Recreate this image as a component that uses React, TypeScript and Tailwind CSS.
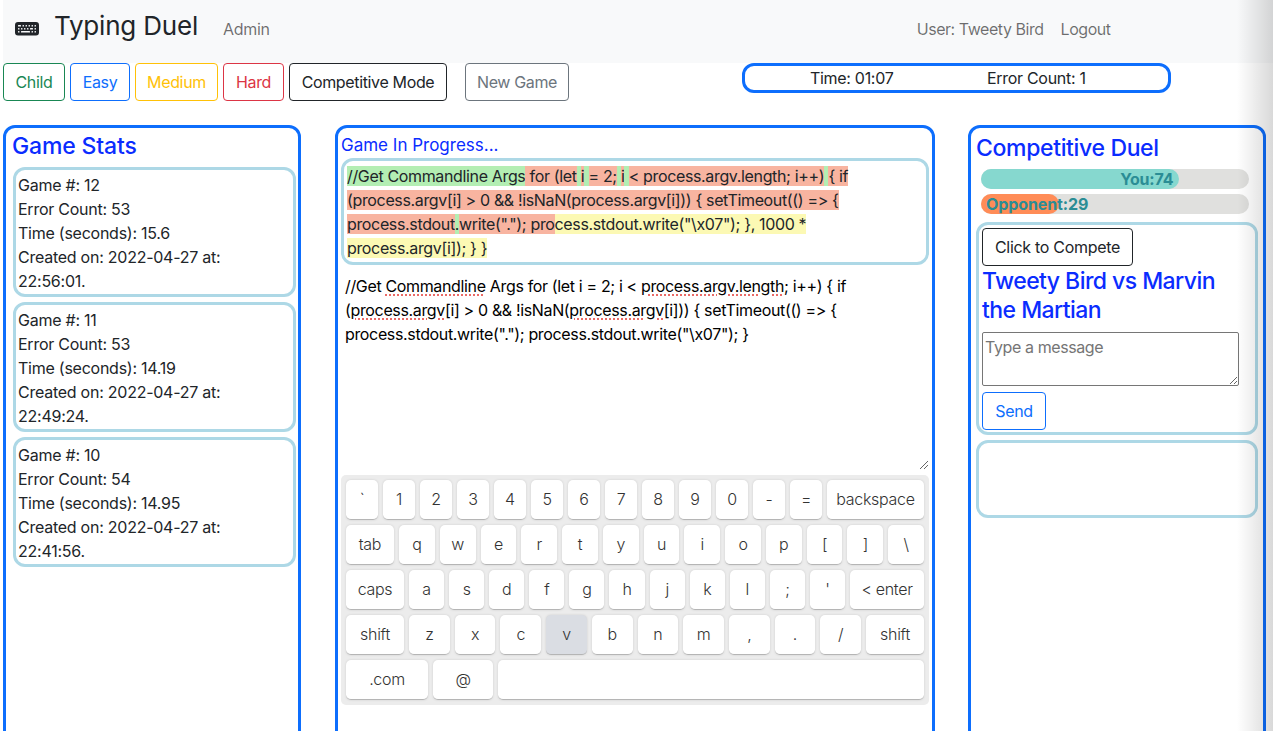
import React from "react";
import { BsKeyboardFill } from "react-icons/bs";

const games = [
  { id: 12, errors: 53, time: "15.6", created: "22:56:01." },
  { id: 11, errors: 53, time: "14.19", created: "22:49:24." },
  { id: 10, errors: 54, time: "14.95", created: "22:41:56." },
];

const modes = [
  { label: "Child", cls: "w-[62px] border-[#198754] text-[#198754]" },
  { label: "Easy", cls: "w-[60px] border-[#0d6efd] text-[#0d6efd]" },
  { label: "Medium", cls: "w-[83px] border-[#ffc107] text-[#ffc107]" },
  { label: "Hard", cls: "w-[61px] border-[#dc3545] text-[#dc3545]" },
  { label: "Competitive Mode", cls: "w-[158px] border-[#212529] text-[#212529]" },
];

const numberRow = ["`", "1", "2", "3", "4", "5", "6", "7", "8", "9", "0", "-", "="];
const tabRow = ["q", "w", "e", "r", "t", "y", "u", "i", "o", "p", "[", "]", "\\"];
const capsRow = ["a", "s", "d", "f", "g", "h", "j", "k", "l", ";", "'"];
const shiftRow = ["z", "x", "c", "v", "b", "n", "m", ",", ".", "/"];

type Seg = { t: string; c?: "g" | "r" | "y" };

const typed: Seg[][] = [
  [
    { t: "//Get Commandline Args", c: "g" },
    { t: " for (let", c: "r" },
    { t: " ", c: "g" },
    { t: "i", c: "r" },
    { t: " ", c: "g" },
    { t: "= 2;", c: "r" },
    { t: " ", c: "g" },
    { t: "i", c: "r" },
    { t: " ", c: "g" },
    { t: "< process.argv.length; i++)", c: "r" },
    { t: " ", c: "g" },
    { t: "{ if", c: "r" },
  ],
  [{ t: "(process.argv[i] > 0 && !isNaN(process.argv[i])) { setTimeout(() => {", c: "r" }],
  [
    { t: "process.stdout", c: "r" },
    { t: ".", c: "g" },
    { t: 'write("."); pro', c: "r" },
    { t: 'cess.stdout.write("\\x07"); }, 1000 *', c: "y" },
  ],
  [{ t: "process.argv[i]); } }", c: "y" }],
];

const segColor = { g: "bg-[#b3eeb3]", r: "bg-[#f8b4a0]", y: "bg-[#fcf9b4]" };

function Key({ label, cls = "flex-1", active = false }: { label: string; cls?: string; active?: boolean }) {
  return (
    <div
      className={`flex h-[40px] items-center justify-center rounded-[5px] border-b border-[#b5b5b5] pb-[2px] text-[16px] font-light tracking-[-0.3px] text-[#333] shadow-[0_0_3px_-1px_rgba(0,0,0,0.3)] ${
        active ? "bg-[#dadde3]" : "bg-white"
      } ${cls}`}
    >
      {label}
    </div>
  );
}

function Squiggle({ children }: { children: React.ReactNode }) {
  return (
    <span className="underline decoration-[#ea6a66] decoration-dotted decoration-[1.5px] underline-offset-[2px]">{children}</span>
  );
}

export default function App() {
  return (
    <div className="relative h-[731px] w-full overflow-hidden bg-white font-['Inter',sans-serif] text-[16px] leading-6 text-[#212529]">
      <header className="ml-[3px] flex h-[63px] items-center bg-[#f8f9fa] pb-[7px] pl-[12px]">
        <BsKeyboardFill className="h-[24px] w-[24px] text-[#212529]" />
        <span className="mb-[4px] ml-[15px] text-[26px] tracking-[-0.2px] text-[#212529]">Typing Duel</span>
        <span className="ml-[25px] mt-[2px] text-[#00000091] tracking-[-0.3px]">Admin</span>
        <span className="ml-[647px] mt-[2px] text-[#00000091] tracking-[-0.45px]">User: Tweety Bird</span>
        <span className="ml-[17px] mt-[2px] text-[#00000091] tracking-[-0.45px]">Logout</span>
      </header>

      <div className="flex items-start pl-[3px]">
        <div className="flex gap-[5px]">
          {modes.map((m) => (
            <button key={m.label} className={`h-[38px] rounded-[4px] border tracking-[-0.35px] ${m.cls}`}>
              {m.label}
            </button>
          ))}
        </div>
        <button className="ml-[18px] h-[38px] w-[104px] rounded-[4px] border border-[#6c757d] tracking-[-0.35px] text-[#6c757d]">
          New Game
        </button>
        <div className="ml-[173px] flex h-[30px] w-[429px] items-center rounded-[12px] border-[3px] border-[#0d6efd] pl-[65px] tracking-[-0.3px]">
          <span className="w-[177px]">Time: 01:07</span>
          <span>Error Count: 1</span>
        </div>
      </div>

      <main className="mt-[24px] flex items-start pl-[3px]">
        <section className="h-[640px] w-[298px] rounded-[12px] border-[3px] border-[#0d6efd] pl-[7px] pr-[2px]">
          <h2 className="-ml-[1px] mt-[4px] text-[23px] font-medium leading-[29px] tracking-[-0.15px] text-[#0a2cff]">Game Stats</h2>
          <div className="mt-[6px] flex flex-col gap-[5px]">
            {games.map((g) => (
              <div key={g.id} className="h-[130px] rounded-[12px] border-[3px] border-[#add8e6] px-[2px] py-[3px] tracking-[-0.25px]">
                <p>Game #: {g.id}</p>
                <p>Error Count: {g.errors}</p>
                <p>Time (seconds): {g.time}</p>
                <p>Created on: 2022-04-27 at:</p>
                <p>{g.created}</p>
              </div>
            ))}
          </div>
        </section>

        <section className="ml-[34px] h-[640px] w-[600px] rounded-[12px] border-[3px] border-[#0d6efd] px-[3px]">
          <p className="mt-[5px] text-[17px] text-[#0a2cff]">Game In Progress...</p>
          <div className="mt-[1px] h-[107px] w-[588px] rounded-[12px] border-[3px] border-[#add8e6] px-[3px] py-[3px] tracking-[-0.35px]">
            {typed.map((line, i) => (
              <div key={i} className="whitespace-pre">
                {line.map((s, j) => (
                  <span key={j} className={s.c ? segColor[s.c] : ""}>
                    {s.t}
                  </span>
                ))}
              </div>
            ))}
          </div>

          <div className="relative h-[210px] w-[588px] px-[4px] pt-[9px] tracking-[-0.35px] text-black">
            <p className="whitespace-pre">
              //Get <Squiggle>Commandline</Squiggle> Args for (let i = 2; i &lt; <Squiggle>process.argv.length</Squiggle>; i++) {"{"} if
            </p>
            <p className="whitespace-pre">
              (<Squiggle>process.argv</Squiggle>[i] &gt; 0 &amp;&amp; !isNaN(<Squiggle>process.argv</Squiggle>[i])) {"{"} setTimeout(() =&gt; {"{"}
            </p>
            <p className="whitespace-pre">process.stdout.write("."); process.stdout.write("\x07"); {"}"}</p>
            <svg className="absolute bottom-[6px] right-[1px] h-[8px] w-[8px]" viewBox="0 0 8 8">
              <path d="M0 8 L8 0 M4 8 L8 4" stroke="#666" strokeWidth="1" />
            </svg>
          </div>

          <div className="flex w-[588px] flex-col gap-[5px] rounded-[5px] bg-[#ececec] p-[5px]">
            <div className="flex gap-[5px]">
              {numberRow.map((k) => (
                <Key key={k} label={k} />
              ))}
              <Key label="backspace" cls="w-[97px] shrink-0" />
            </div>
            <div className="flex gap-[5px]">
              <Key label="tab" cls="w-[48px] shrink-0" />
              {tabRow.map((k) => (
                <Key key={k} label={k} />
              ))}
            </div>
            <div className="flex gap-[5px]">
              <Key label="caps" cls="w-[58px] shrink-0" />
              {capsRow.map((k) => (
                <Key key={k} label={k} />
              ))}
              <Key label="< enter" cls="w-[74px] shrink-0" />
            </div>
            <div className="flex gap-[5px]">
              <Key label="shift" cls="w-[58px] shrink-0" />
              {shiftRow.map((k) => (
                <Key key={k} label={k} active={k === "v"} />
              ))}
              <Key label="shift" cls="w-[58px] shrink-0" />
            </div>
            <div className="flex gap-[5px]">
              <Key label=".com" cls="w-[82px] shrink-0" />
              <Key label="@" cls="w-[60px] shrink-0" />
              <Key label="" />
            </div>
          </div>
        </section>

        <section className="ml-[33px] h-[640px] w-[298px] rounded-[12px] border-[3px] border-[#0d6efd] px-[5px]">
          <h2 className="mt-[6px] text-[23px] font-medium leading-[29px] tracking-[-0.35px] text-[#0a2cff]">Competitive Duel</h2>
          <div className="ml-[5px] mr-[9px] mt-[6px] h-[20px] rounded-[10px] bg-[#e0e0de]">
            <div className="flex h-full w-[74%] items-center justify-end rounded-[10px] bg-[#86d8cf] pr-[6px] text-[16px] font-bold tracking-[-0.2px] text-[#2b8d95]">
              You:74
            </div>
          </div>
          <div className="ml-[5px] mr-[9px] mt-[5px] h-[20px] rounded-[10px] bg-[#e0e0de]">
            <div className="flex h-full w-[29%] items-center whitespace-nowrap rounded-[10px] bg-[#ff8c57] pl-[5px] text-[16px] font-bold tracking-[-0.1px] text-[#2b8d95]">
              Opponent:29
            </div>
          </div>

          <div className="mt-[8px] h-[213px] rounded-[12px] border-[3px] border-[#add8e6] px-[3px] py-[3px]">
            <button className="h-[38px] w-[151px] rounded-[4px] border border-[#212529] tracking-[-0.3px]">Click to Compete</button>
            <h3 className="mt-[1px] text-[23px] font-medium leading-[29px] tracking-[-0.55px] text-[#0a2cff]">
              Tweety Bird vs Marvin the Martian
            </h3>
            <textarea
              className="mt-[7px] block h-[54px] w-[257px] rounded-[2px] border border-[#767676] px-[2px] py-[2px] tracking-[-0.4px] placeholder:text-[#757575]"
              placeholder="Type a message"
            />
            <button className="mt-[6px] h-[38px] w-[64px] rounded-[4px] border border-[#0d6efd] tracking-[-0.3px] text-[#0d6efd]">Send</button>
          </div>
          <div className="mt-[5px] h-[78px] rounded-[12px] border-[3px] border-[#add8e6]" />
        </section>
      </main>

      {/* page shadow on the right edge */}
      <div className="pointer-events-none absolute inset-y-0 right-0 w-[36px] bg-gradient-to-r from-transparent to-black/15" />
    </div>
  );
}
